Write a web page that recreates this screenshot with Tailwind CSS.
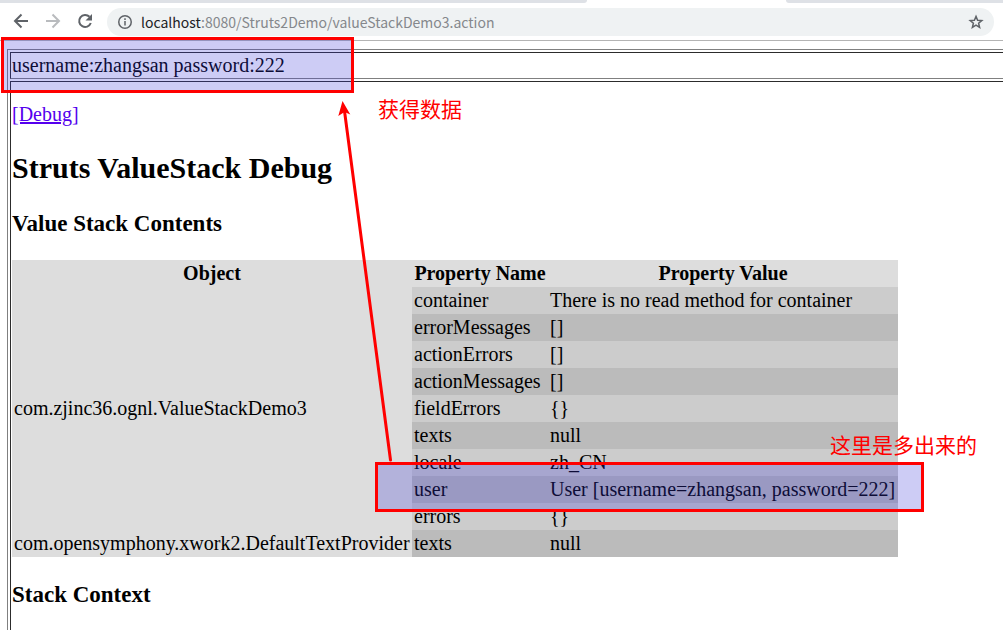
<!DOCTYPE html>
<html lang="zh-CN">
<head>
<meta charset="utf-8">
<title>valueStackDemo3</title>
<script src="https://cdn.jsdelivr.net/npm/@tailwindcss/browser@4"></script>
</head>
<body class="relative h-screen overflow-hidden bg-white text-black">
<header class="border-b border-[#b4b4b4]">
  <div class="flex h-[3px] justify-between">
    <div class="w-[587px] rounded-br-lg bg-[#dee1e6]"></div>
    <div class="w-[217px] rounded-bl-lg bg-[#dee1e6]"></div>
  </div>
  <div class="flex items-center pt-[5px] pr-[9px] pb-1 pl-[11px]">
    <button aria-label="Back" class="mr-3 size-5"><svg viewBox="0 0 20 20" class="size-5" fill="none" stroke="#5f6368" stroke-width="2"><path d="M17 9H4.500M10.500 2.500 4 9l6.500 6.500"/></svg></button>
    <button aria-label="Forward" class="mr-3 size-5"><svg viewBox="0 0 20 20" class="size-5" fill="none" stroke="#b9bbbe" stroke-width="2"><path d="M3 9h12.500M9.500 2.500 16 9l-6.500 6.500"/></svg></button>
    <button aria-label="Reload" class="mr-3 size-5"><svg viewBox="0 0 20 20" class="size-5" fill="none" stroke="#5f6368" stroke-width="2"><path d="M15.800 11A6 6 0 1 1 14.500 4.800"/><path d="M17 2v6.500h-6.500z" fill="#5f6368" stroke="none"/></svg></button>
    <div class="flex h-7 flex-1 items-center rounded-full bg-[#eff2f3] pr-2.5 pl-2.5">
      <svg viewBox="0 0 16 16" class="mr-2 size-4 shrink-0" fill="none" stroke="#5f6368" stroke-width="1.500"><circle cx="8" cy="8" r="6.250"/><path d="M8 7v4.500M8 4.300v1.600"/></svg>
      <div class="flex-1 font-['Noto_Sans_CJK_SC',sans-serif] text-sm leading-5 text-[#85888c]"><span class="text-[#202124]">localhost</span>:8080/Struts2Demo/valueStackDemo3.action</div>
      <button aria-label="Bookmark" class="size-4"><svg viewBox="0 0 16 16" class="size-4" fill="none" stroke="#5f6368" stroke-width="1.500"><path d="M8 2.400l1.600 3.900 4.200.300-3.200 2.700 1 4.100L8 11.200l-3.600 2.200 1-4.100-3.200-2.700 4.200-.300z"/></svg></button>
    </div>
  </div>
</header>
<main class="pt-2 pl-[7px] font-['Liberation_Serif',serif] text-xl leading-[23px]">
  <table class="w-[calc(100%+16px)] border-separate border-spacing-[2px] border border-[#808080]">
    <tbody>
    <tr><td class="border border-t-[#2c2c2c] border-r-[#808080] border-b-[#808080] border-l-[#2c2c2c] p-px">username:zhangsan password:222</td></tr>
    <tr><td class="border border-t-[#2c2c2c] border-r-[#808080] border-b-[#808080] border-l-[#2c2c2c] p-px pb-20">
      <p class="mt-5"><a href="#debug" class="text-[#5500ee] underline">[Debug]</a></p>
      <h2 class="mt-6 text-[30px] leading-[35px] font-bold">Struts ValueStack Debug</h2>
      <h3 class="mt-[25px] text-[23px] leading-[27px] font-bold">Value Stack Contents</h3>
      <table class="mt-[23px] w-[886px] table-fixed border-collapse bg-[#dddddd]">
        <colgroup><col class="w-[400px]"><col class="w-[136px]"><col></colgroup>
        <thead>
        <tr><th class="p-0.5 text-center font-bold">Object</th><th class="p-0.5 text-center font-bold whitespace-nowrap">Property Name</th><th class="p-0.5 text-center font-bold">Property Value</th></tr>
        </thead>
        <tbody>
        <tr class="bg-[#cccccc]"><td rowspan="9" class="bg-[#dddddd] p-0.5 align-middle">com.zjinc36.ognl.ValueStackDemo3</td><td class="p-0.5">container</td><td class="p-0.5">There is no read method for container</td></tr>
        <tr class="bg-[#bbbbbb]"><td class="p-0.5">errorMessages</td><td class="p-0.5">[]</td></tr>
        <tr class="bg-[#cccccc]"><td class="p-0.5">actionErrors</td><td class="p-0.5">[]</td></tr>
        <tr class="bg-[#bbbbbb]"><td class="p-0.5">actionMessages</td><td class="p-0.5">[]</td></tr>
        <tr class="bg-[#cccccc]"><td class="p-0.5">fieldErrors</td><td class="p-0.5">{}</td></tr>
        <tr class="bg-[#bbbbbb]"><td class="p-0.5">texts</td><td class="p-0.5">null</td></tr>
        <tr class="bg-[#cccccc]"><td class="p-0.5">locale</td><td class="p-0.5">zh_CN</td></tr>
        <tr class="bg-[#bbbbbb]"><td class="p-0.5">user</td><td class="p-0.5 whitespace-nowrap">User [username=zhangsan, password=222]</td></tr>
        <tr class="bg-[#cccccc]"><td class="p-0.5">errors</td><td class="p-0.5">{}</td></tr>
        <tr class="bg-[#bbbbbb]"><td class="bg-[#dddddd] p-0.5 whitespace-nowrap">com.opensymphony.xwork2.DefaultTextProvider</td><td class="p-0.5">texts</td><td class="p-0.5">null</td></tr>
        </tbody>
      </table>
      <h3 class="mt-6 text-[23px] leading-[27px] font-bold">Stack Context</h3>
    </td></tr>
    </tbody>
  </table>
</main>
<!-- Annotations drawn over the page -->
<div class="pointer-events-none absolute top-[37px] left-px h-14 w-[353px] border-3 border-[#ff0000] bg-[#3732d7]/25 bg-clip-padding"></div>
<div class="pointer-events-none absolute top-[462px] left-[375px] h-[50px] w-[549px] border-3 border-[#ff0000] bg-[#3732d7]/25 bg-clip-padding"></div>
<svg class="pointer-events-none absolute top-[100px] left-[330px]" width="70" height="365" viewBox="330 100 70 365"><path d="M390.500 460 344.500 111" stroke="#ff0000" stroke-width="3" stroke-linecap="round"/><path d="M342.500 101 350.300 114.500 344.500 112 338.300 116z" fill="#ff0000"/></svg>
<p class="pointer-events-none absolute top-[94px] left-[378px] font-['Noto_Sans_CJK_SC',sans-serif] text-[21px] leading-7 whitespace-nowrap text-[#ff0000]">获得数据</p>
<p class="pointer-events-none absolute top-[430px] left-[830px] font-['Noto_Sans_CJK_SC',sans-serif] text-[21px] leading-7 whitespace-nowrap text-[#ff0000]">这里是多出来的</p>
</body>
</html>
